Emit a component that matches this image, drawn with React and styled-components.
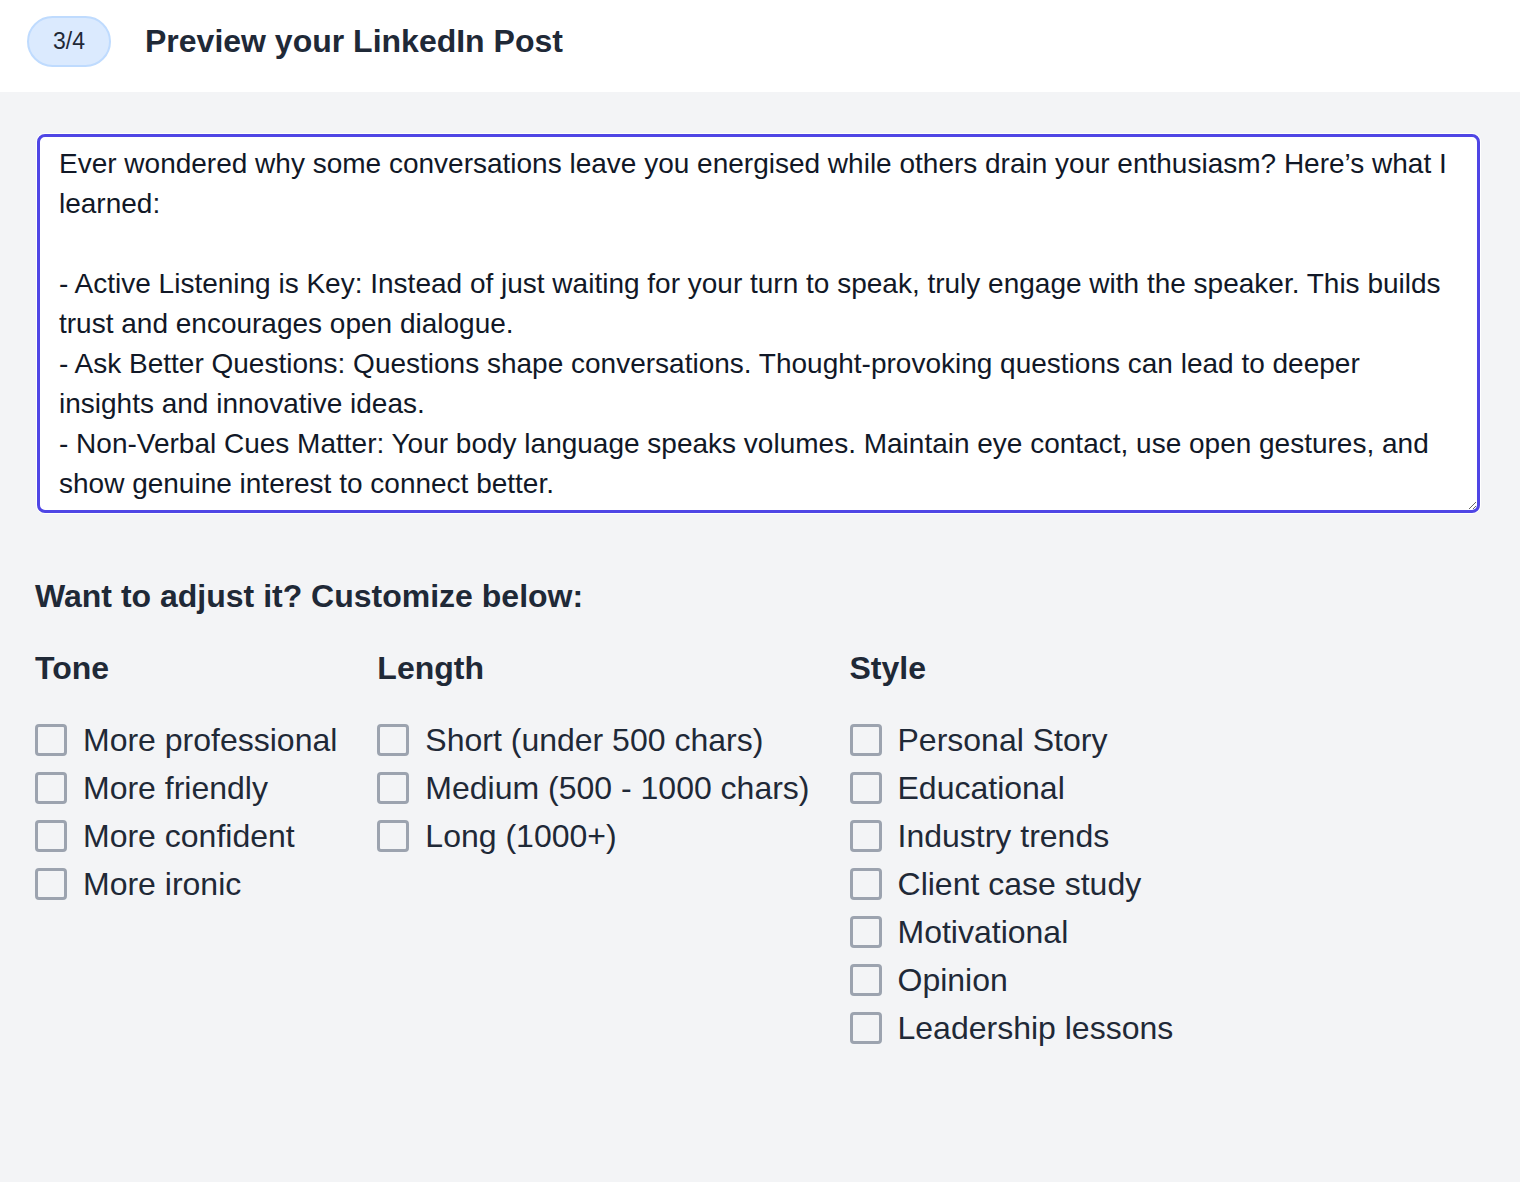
import React from "react";
import styled, { createGlobalStyle } from "styled-components";

const Global = createGlobalStyle`
  html, body { margin: 0; padding: 0; }
  body {
    background: #f3f4f6;
    font-family: "Liberation Sans", Arial, sans-serif;
    color: #1f2937;
  }
  * { box-sizing: border-box; }
`;

const Page = styled.div`
  min-height: 1182px;
  background: #f3f4f6;
`;

const Header = styled.header`
  height: 92px;
  background: #ffffff;
  display: flex;
  align-items: flex-start;
  padding: 16px 0 0 27px;
`;

const HeaderRow = styled.div`
  height: 51px;
  display: flex;
  align-items: center;
  gap: 34px;
`;

const Badge = styled.span`
  width: 84px;
  height: 51px;
  border-radius: 26px;
  background: #dbeafe;
  border: 2px solid #bfdbfe;
  display: flex;
  align-items: center;
  justify-content: center;
  font-size: 23px;
  color: #1f2937;
`;

const Title = styled.h1`
  margin: 0;
  font-size: 32px;
  font-weight: 700;
  color: #1f2937;
`;

const Main = styled.main`
  padding: 42px 40px 0 37px;
`;

const PostBox = styled.textarea`
  display: block;
  width: 100%;
  height: 379px;
  padding: 7px 19px 6px;
  border: 3px solid #4f46e5;
  border-radius: 8px;
  box-shadow: 0 0 0 1px #ffffff;
  outline: none;
  background: #ffffff;
  font-family: "Liberation Sans", Arial, sans-serif;
  font-size: 28px;
  line-height: 40px;
  color: #111827;
  resize: vertical;
  overflow: hidden;
`;

const Customize = styled.h2`
  margin: 59px 0 0 -2px;
  font-size: 32px;
  line-height: 48px;
  font-weight: 700;
  color: #1f2937;
`;

const Columns = styled.div`
  display: flex;
  gap: 40px;
  margin-top: 24px;
  margin-left: -2px;
`;

const Column = styled.div`
  display: flex;
  flex-direction: column;
`;

const ColumnTitle = styled.h3`
  margin: 0 0 24px 0;
  font-size: 32px;
  line-height: 48px;
  font-weight: 700;
  color: #1f2937;
`;

const Option = styled.label`
  display: flex;
  align-items: center;
  gap: 16px;
  height: 48px;
  font-size: 32px;
  color: #1f2937;
  white-space: nowrap;
  cursor: pointer;
`;

const Box = styled.input.attrs({ type: "checkbox" })`
  appearance: none;
  margin: 0;
  width: 32px;
  height: 32px;
  border: 3px solid #9ca3af;
  border-radius: 4px;
  background: transparent;
  flex: none;
`;

const post = `Ever wondered why some conversations leave you energised while others drain your enthusiasm? Here’s what I learned:

- Active Listening is Key: Instead of just waiting for your turn to speak, truly engage with the speaker. This builds trust and encourages open dialogue.
- Ask Better Questions: Questions shape conversations. Thought-provoking questions can lead to deeper insights and innovative ideas.
- Non-Verbal Cues Matter: Your body language speaks volumes. Maintain eye contact, use open gestures, and show genuine interest to connect better.`;

const groups = [
  { title: "Tone", items: ["More professional", "More friendly", "More confident", "More ironic"] },
  { title: "Length", items: ["Short (under 500 chars)", "Medium (500 - 1000 chars)", "Long (1000+)"] },
  {
    title: "Style",
    items: [
      "Personal Story",
      "Educational",
      "Industry trends",
      "Client case study",
      "Motivational",
      "Opinion",
      "Leadership lessons",
    ],
  },
];

export default function App() {
  return (
    <Page>
      <Global />
      <Header>
        <HeaderRow>
          <Badge>3/4</Badge>
          <Title>Preview your LinkedIn Post</Title>
        </HeaderRow>
      </Header>
      <Main>
        <PostBox defaultValue={post} spellCheck={false} />
        <Customize>Want to adjust it? Customize below:</Customize>
        <Columns>
          {groups.map((g) => (
            <Column key={g.title}>
              <ColumnTitle>{g.title}</ColumnTitle>
              {g.items.map((it) => (
                <Option key={it}>
                  <Box />
                  {it}
                </Option>
              ))}
            </Column>
          ))}
        </Columns>
      </Main>
    </Page>
  );
}
